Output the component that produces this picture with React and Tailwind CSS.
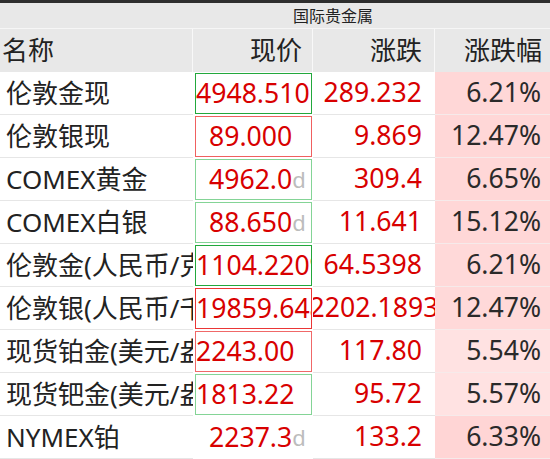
import React from "react";

const FONT = { fontFamily: '"Noto Sans", "Noto Sans CJK SC", sans-serif' };

const rows = [
  { name: "伦敦金现", price: "4948.510", mode: "left", frame: "bg-[#22a83c]", chg: "289.232", pct: "6.21%", bg: "bg-[#ffd7d7]" },
  { name: "伦敦银现", price: "89.000", mode: "pad", frame: "bg-[#f06060]", chg: "9.869", pct: "12.47%", bg: "bg-[#ffd7d7]" },
  { name: "COMEX黄金", price: "4962.0", suffix: "d", mode: "pad", frame: "bg-[#84d496]", chg: "309.4", pct: "6.65%", bg: "bg-[#ffd7d7]" },
  { name: "COMEX白银", price: "88.650", suffix: "d", mode: "pad", frame: "bg-[#84d496]", chg: "11.641", pct: "15.12%", bg: "bg-[#ffd7d7]" },
  { name: "伦敦金(人民币/克)", price: "1104.2209", mode: "left", frame: "bg-[#22a83c]", chg: "64.5398", pct: "6.21%", bg: "bg-[#ffd9d9]" },
  { name: "伦敦银(人民币/千克)", price: "19859.648", mode: "left", frame: "bg-[#ea3636]", chg: "2202.1893", chgCenter: true, pct: "12.47%", bg: "bg-[#ffd9d9]" },
  { name: "现货铂金(美元/盎司)", price: "2243.00", mode: "left", frame: "bg-[#f06868]", chg: "117.80", pct: "5.54%", bg: "bg-[#ffe2e2]" },
  { name: "现货钯金(美元/盎司)", price: "1813.22", mode: "left", frame: "bg-[#84d496]", chg: "95.72", pct: "5.57%", bg: "bg-[#ffe2e2]" },
  { name: "NYMEX铂", price: "2237.3", suffix: "d", mode: "pad", frame: "bg-white", chg: "133.2", pct: "6.33%", bg: "bg-[#ffd5d5]" },
];

function PriceCell({ r }) {
  const align = r.mode === "pad" ? "pl-[13px]" : "pl-0";
  return (
    <div className="w-[120px] shrink-0 h-full pl-[2px] pr-[1px] py-[1px]">
      <div className={`h-full p-[1px] ${r.frame}`}>
        <div className={`h-full bg-white flex items-center justify-start ${align} overflow-hidden whitespace-nowrap`}>
          <span className="text-[#d80000] shrink-0">{r.price}</span>
          {r.suffix && <span className="text-[#bcbcbc] text-[22px] shrink-0">{r.suffix}</span>}
        </div>
      </div>
    </div>
  );
}

export default function App() {
  return (
    <div className="w-[550px] h-[459px] overflow-hidden bg-white" style={FONT}>
      <div className="h-[3px] bg-[#2e2e2e]" />
      <div className="h-[25px] bg-[#e8e8e8] flex items-center pl-[293px] text-[16px] text-[#222] leading-none">
        国际贵金属
      </div>
      <div className="h-[1px] bg-[#f6f6f6]" />
      <div className="h-[43px] bg-[#e8e8e8] flex text-[26px] text-[#222]">
        <div className="w-[193px] shrink-0 flex items-center pl-[2px] border-r border-[#f8f8f8]">名称</div>
        <div className="w-[120px] shrink-0 flex items-center justify-end pr-[10px] border-r border-[#f8f8f8]">现价</div>
        <div className="w-[122px] shrink-0 flex items-center justify-end pr-[12px] border-r border-[#f8f8f8]">涨跌</div>
        <div className="flex-1 flex items-center justify-end pr-[8px]">涨跌幅</div>
      </div>
      {rows.map((r, i) => (
        <div key={i} className="h-[43px] flex text-[26.6px]">
          <div className="w-[193px] shrink-0 flex items-center pl-[6px] overflow-hidden whitespace-nowrap text-[26px] text-[#222] border-b border-[#e6e6e6]">
            {r.name}
          </div>
          <PriceCell r={r} />
          <div
            className={`w-[122px] shrink-0 flex items-center overflow-hidden whitespace-nowrap text-[#d80000] border-b border-[#e6e6e6] ${
              r.chgCenter ? "justify-center" : "justify-end pr-[13px]"
            }`}
          >
            <span className="shrink-0">{r.chg}</span>
          </div>
          <div className={`flex-1 flex items-center justify-end pr-[9px] text-[#2a2a2a] ${r.bg} border-b border-[#f6eaea]`}>
            {r.pct}
          </div>
        </div>
      ))}
    </div>
  );
}
